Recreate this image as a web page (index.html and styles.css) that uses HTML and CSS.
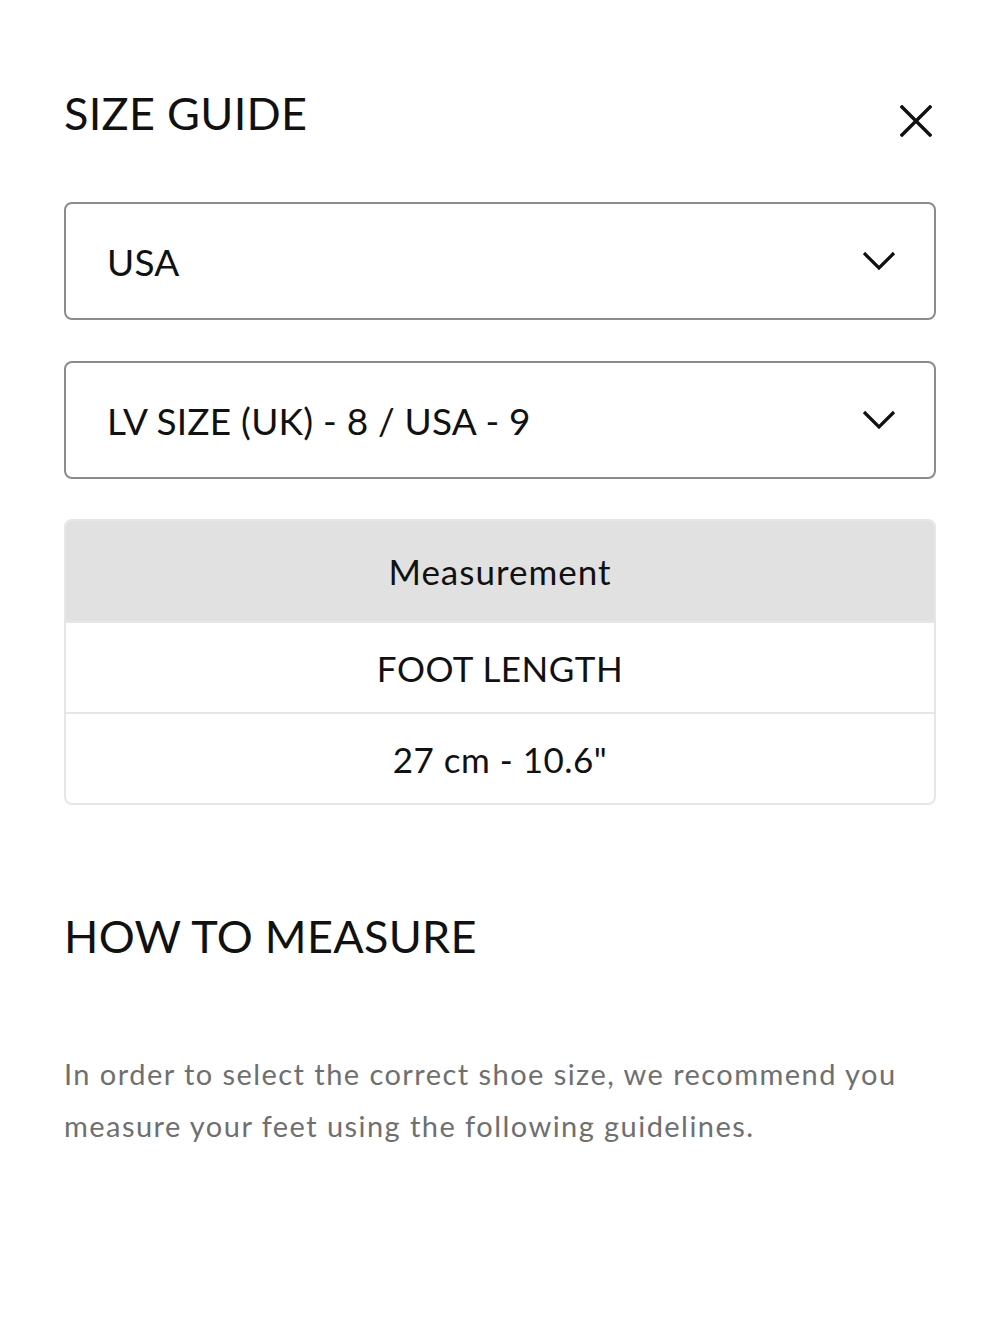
FILE: index.html
```html
<!DOCTYPE html>
<html lang="en">
<head>
<meta charset="utf-8">
<title>Size Guide</title>
<link rel="stylesheet" href="styles.css">
</head>
<body>
<div class="panel">
  <header class="head">
    <h1 class="title">SIZE GUIDE</h1>
    <button class="close" aria-label="Close">
      <svg width="32" height="32" viewBox="0 0 32 32"><path d="M2 2 L30 30 M30 2 L2 30" stroke="#111" stroke-width="3.4" fill="none" stroke-linecap="square"/></svg>
    </button>
  </header>

  <div class="select">
    <span class="select-text">USA</span>
    <svg class="chev" width="34" height="20" viewBox="0 0 34 20"><path d="M2 2 L17 17 L32 2" stroke="#111" stroke-width="3.2" fill="none"/></svg>
  </div>
  <div class="select">
    <span class="select-text">LV SIZE (UK) - 8 / USA - 9</span>
    <svg class="chev" width="34" height="20" viewBox="0 0 34 20"><path d="M2 2 L17 17 L32 2" stroke="#111" stroke-width="3.2" fill="none"/></svg>
  </div>

  <div class="table">
    <div class="row row-head">Measurement</div>
    <div class="row">FOOT LENGTH</div>
    <div class="row">27 cm - 10.6"</div>
  </div>

  <h2 class="subtitle">HOW TO MEASURE</h2>
  <p class="text">In order to select the correct shoe size, we recommend you measure your feet using the following guidelines.</p>
</div>
</body>
</html>
```
FILE: styles.css
```css
* { box-sizing: border-box; }
html, body { margin: 0; padding: 0; background: #fff; }
body {
  font-family: "Lato", "Liberation Sans", sans-serif;
  color: #111;
}
.panel {
  padding: 78px 64px 0 64px;
}
.head {
  display: flex;
  justify-content: space-between;
  align-items: center;
  height: 70px;
}
.title {
  margin: 0;
  font-weight: 400;
  font-size: 45px;
  letter-spacing: 0.3px;
  line-height: 66px;
}
.close {
  border: 0;
  background: none;
  padding: 0;
  margin-right: 4px;
  margin-top: 16px;
  width: 32px;
  height: 32px;
  display: flex;
}
.select {
  height: 118px;
  border: 2px solid #8c8c8c;
  border-radius: 8px;
  display: flex;
  align-items: center;
  justify-content: space-between;
  padding: 0 38px 0 41px;
  margin-top: 54px;
}
.select + .select { margin-top: 41px; }
.select-text {
  font-size: 37px;
  letter-spacing: 0.2px;
}
.chev { display: block; }
.table {
  margin-top: 40px;
  border: 2px solid #e6e6e6;
  border-radius: 8px;
  overflow: hidden;
}
.row {
  height: 91px;
  display: flex;
  align-items: center;
  justify-content: center;
  font-size: 35px;
  letter-spacing: 0.5px;
  border-top: 2px solid #e6e6e6;
}
.row-head {
  border-top: 0;
  background: #e1e1e1;
  height: 100px;
  letter-spacing: 1px;
}
.subtitle {
  margin: 98px 0 0 0;
  font-weight: 400;
  font-size: 45px;
  letter-spacing: 0.3px;
  line-height: 66px;
}
.text {
  margin: 79px 0 0 0;
  font-size: 29px;
  line-height: 52px;
  color: #6f6f6f;
  letter-spacing: 1.45px;
}
```
